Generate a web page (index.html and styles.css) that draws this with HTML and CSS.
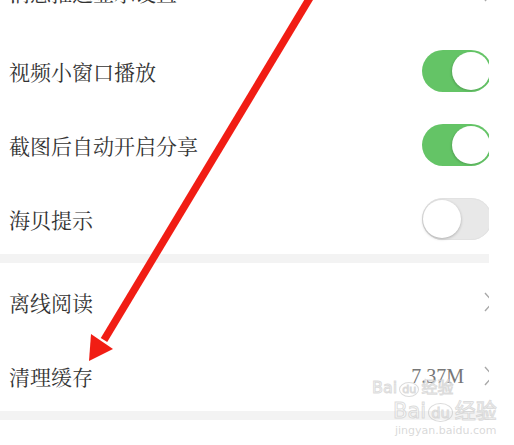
FILE: index.html
```html
<!DOCTYPE html>
<html lang="zh-CN">

<head>
    <meta charset="UTF-8">
    <meta name="viewport" content="width=device-width, initial-scale=1.0">
    <title>设置</title>
    <link rel="stylesheet" href="styles.css">
</head>

<body>
    <div class="screen">
        <section class="group group-first">
            <div class="row row-cut">
                <span class="label">消息推送显示设置</span>
                <svg class="chevron" viewBox="0 0 10 20" width="10" height="20"><polyline points="1,1 9,10 1,19" /></svg>
            </div>
            <div class="row">
                <span class="label">视频小窗口播放</span>
                <span class="switch on"><span class="knob"></span></span>
            </div>
            <div class="row">
                <span class="label">截图后自动开启分享</span>
                <span class="switch on"><span class="knob"></span></span>
            </div>
            <div class="row">
                <span class="label">海贝提示</span>
                <span class="switch"><span class="knob"></span></span>
            </div>
        </section>
        <div class="gap"></div>
        <section class="group">
            <div class="row">
                <span class="label">离线阅读</span>
                <svg class="chevron" viewBox="0 0 10 20" width="10" height="20"><polyline points="1,1 9,10 1,19" /></svg>
            </div>
            <div class="row">
                <span class="label">清理缓存</span>
                <span class="right">
                    <span class="value">7.37M</span>
                    <svg class="chevron" viewBox="0 0 10 20" width="10" height="20"><polyline points="1,1 9,10 1,19" /></svg>
                </span>
            </div>
        </section>
        <div class="gap"></div>
    </div>

    <!-- annotation arrow drawn over the screenshot -->
    <svg class="arrow" width="514" height="445" viewBox="0 0 514 445">
        <line x1="311" y1="-4" x2="104" y2="340" />
        <polygon points="89,361 91,334 113,349" />
    </svg>

    <div class="watermark wm-small">Bai<span class="paw">du</span>经验</div>
    <div class="watermark wm-big">Bai<span class="paw">du</span>经验</div>
    <div class="watermark wm-url">jingyan.baidu.com</div>
</body>

</html>
```

FILE: styles.css
```css
body {
    margin: 0;
    padding: 0;
    background-color: #fff;
    font-family: "Noto Serif CJK SC", "Noto Sans CJK SC", serif;
    color: #333;
    overflow: hidden;
    height: 445px;
}

.screen {
    width: 489px;
    overflow: hidden;
}

.group-first {
    margin-top: -42px;
}

.row {
    box-sizing: border-box;
    height: 74px;
    padding: 4px 0 0 9px;
    display: flex;
    align-items: center;
    justify-content: space-between;
}

.row-cut {
    padding-top: 0;
    padding-bottom: 6px;
}

.label {
    font-size: 21px;
    line-height: 1;
    color: #333;
}

.gap {
    height: 9px;
    background-color: #f3f3f3;
}

.switch {
    position: relative;
    flex: none;
    width: 70px;
    height: 42px;
    margin-right: -3px;
    border-radius: 21px;
    background-color: #e8e8e8;
    box-shadow: inset 0 0 0 1px #e2e2e2;
}

.switch .knob {
    position: absolute;
    top: 2px;
    left: 1px;
    width: 38px;
    height: 38px;
    border-radius: 50%;
    background-color: #fff;
    box-shadow: 0 1px 3px rgba(0, 0, 0, 0.25);
}

.switch.on {
    background-color: #64c466;
    box-shadow: none;
}

.switch.on .knob {
    left: 30px;
    box-shadow: -1px 1px 2px rgba(0, 0, 0, 0.15);
}

.right {
    display: flex;
    align-items: center;
}

.value {
    font-family: "Liberation Serif", serif;
    font-size: 20px;
    color: #777;
    margin-right: 20px;
}

.chevron {
    flex: none;
    margin-right: -5px;
    fill: none;
    stroke: #a8a8a8;
    stroke-width: 1.4;
}

.arrow {
    position: absolute;
    left: 0;
    top: 0;
}

.arrow line {
    stroke: #f11d14;
    stroke-width: 7.5;
}

.arrow polygon {
    fill: #f11d14;
}

.watermark {
    position: absolute;
    line-height: 1;
    font-family: "DejaVu Sans", "Noto Sans CJK SC", sans-serif;
    color: rgba(255, 255, 255, 0.6);
    -webkit-text-stroke: 1px rgba(190, 190, 190, 0.55);
    white-space: nowrap;
}

.watermark .paw {
    font-size: 0.7em;
    border: 1px solid rgba(190, 190, 190, 0.55);
    border-radius: 50%;
    padding: 0 2px;
    margin: 0 2px;
}

.wm-small {
    left: 372px;
    top: 380px;
    font-size: 16px;
}

.wm-big {
    left: 393px;
    top: 401px;
    font-size: 21px;
}

.wm-url {
    left: 395px;
    top: 425px;
    font-size: 11px;
    -webkit-text-stroke: 0;
    color: rgba(200, 200, 200, 0.7);
}
```
